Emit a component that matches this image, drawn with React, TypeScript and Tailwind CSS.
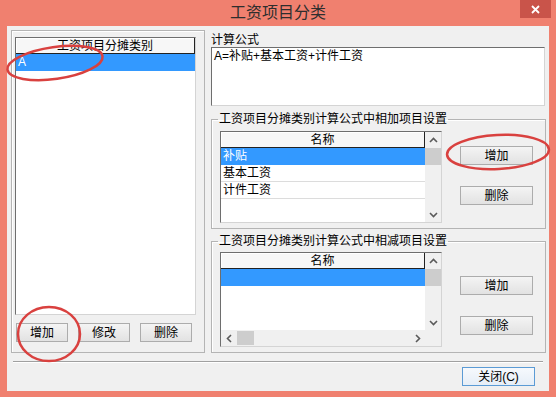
import React from "react";

const font = "font-['Liberation_Sans','Noto_Sans_CJK_SC',sans-serif]";

function Chevron({ dir }: { dir: "up" | "down" | "left" | "right" }) {
  const pts = {
    up: "1,6 4.5,2.5 8,6",
    down: "1,3 4.5,6.5 8,3",
    left: "6,1 2.5,4.5 6,8",
    right: "3,1 6.5,4.5 3,8",
  }[dir];
  return (
    <svg width="9" height="9" viewBox="0 0 9 9">
      <polyline points={pts} fill="none" stroke="#5a5a5a" strokeWidth="1.6" />
    </svg>
  );
}

function Btn({ label, className = "" }: { label: string; className?: string }) {
  return (
    <div
      className={`flex items-center justify-center border border-[#acacac] bg-linear-to-b from-[#f4f4f4] to-[#e2e2e2] text-[12px] leading-none text-black ${className}`}
    >
      {label}
    </div>
  );
}

function VScroll({ thumbTop = 0 }: { thumbTop?: number }) {
  return (
    <div className="flex w-[16px] flex-col bg-[#f0f0f0]">
      <div className="flex h-[16px] items-center justify-center">
        <Chevron dir="up" />
      </div>
      <div className="h-[17px] bg-[#cdcdcd]" style={{ marginTop: thumbTop }} />
      <div className="flex-1" />
      <div className="flex h-[16px] items-center justify-center">
        <Chevron dir="down" />
      </div>
    </div>
  );
}

function Header({ label }: { label: string }) {
  return (
    <div className="flex h-[16px] items-center justify-center border-r border-b border-r-[#222] border-b-[#222] bg-[#f7f7f7] text-[12px] leading-none text-black shadow-[inset_1px_1px_0_#fff]">
      {label}
    </div>
  );
}

function Row({ label, selected = false }: { label: string; selected?: boolean }) {
  return (
    <div
      className={`flex h-[17px] items-center border-b pl-[2px] text-[12px] leading-none ${
        selected ? "border-b-[#3399ff] bg-[#3399ff] text-white" : "border-b-[#dcdcdc] text-black"
      }`}
    >
      {label}
    </div>
  );
}

function Group({ title, children, className = "" }: { title: string; children: React.ReactNode; className?: string }) {
  return (
    <fieldset className={`border border-[#b4b4b4] shadow-[inset_1px_1px_0_#fff] ${className}`}>
      <legend className="ml-[6px] px-[1px] text-[12px] leading-[13px] text-black">{title}</legend>
      {children}
    </fieldset>
  );
}

const sunken = "border border-t-[#6e6e6e] border-l-[#6e6e6e] border-r-[#d4d4d4] border-b-[#d4d4d4] bg-white";

export default function App() {
  return (
    <div className={`relative flex h-[397px] w-[556px] flex-col bg-[#f0806f] ${font}`}>
      {/* title bar */}
      <div className="relative flex h-[26px] items-center justify-center">
        <span className="text-[16px] leading-none text-[#2e2e2e]">工资项目分类</span>
        <div className="absolute top-0 right-[5px] flex h-[18px] w-[31px] items-center justify-center bg-[#c9544a]">
          <svg width="9" height="9" viewBox="0 0 9 9">
            <path d="M1 1L8 8M8 1L1 8" stroke="#fff" strokeWidth="1.8" />
          </svg>
        </div>
      </div>

      {/* client */}
      <div className="mx-[7px] mb-[6px] flex flex-1 flex-col bg-[#f0f0f0]">
        <div className="flex pt-[4px] pl-[4px]">
          {/* left panel */}
          <div className="flex h-[323px] w-[194px] flex-col border border-[#b4b4b4] pt-[6px] pl-[3px] shadow-[inset_1px_1px_0_#fff]">
            <div className={`h-[278px] w-[181px] ${sunken}`}>
              <Header label="工资项目分摊类别" />
              <Row label="A" selected />
            </div>
            <div className="mt-[8px] ml-[1px] flex gap-[10px]">
              <Btn label="增加" className="h-[19px] w-[52px]" />
              <Btn label="修改" className="h-[19px] w-[52px]" />
              <Btn label="删除" className="h-[19px] w-[52px]" />
            </div>
          </div>

          {/* right panel */}
          <div className="ml-[6px] flex w-[335px] flex-col">
            <div className="mt-[4px] text-[12px] leading-[13px] text-black">计算公式</div>
            <div className={`h-[59px] w-[334px] pt-[2px] pl-[2px] text-[12px] leading-[13px] text-black ${sunken}`}>
              A=补贴+基本工资+计件工资
            </div>

            <Group title="工资项目分摊类别计算公式中相加项目设置" className="mt-[7px] h-[116px]">
              <div className="flex pt-[5px] pl-[8px]">
                <div className={`flex h-[92px] w-[222px] ${sunken}`}>
                  <div className="flex-1">
                    <Header label="名称" />
                    <Row label="补贴" selected />
                    <Row label="基本工资" />
                    <Row label="计件工资" />
                  </div>
                  <VScroll />
                </div>
                <div className="ml-[18px] flex flex-col gap-[21px] pt-[15px]">
                  <Btn label="增加" className="h-[19px] w-[73px]" />
                  <Btn label="删除" className="h-[19px] w-[73px]" />
                </div>
              </div>
            </Group>

            <Group title="工资项目分摊类别计算公式中相减项目设置" className="mt-[6px] h-[118px]">
              <div className="flex pt-[4px] pl-[8px]">
                <div className={`flex h-[95px] w-[222px] flex-col ${sunken}`}>
                  <div className="flex flex-1">
                    <div className="flex-1">
                      <Header label="名称" />
                      <Row label="" selected />
                    </div>
                    <VScroll />
                  </div>
                  <div className="flex h-[16px] bg-[#f0f0f0]">
                    <div className="flex w-[16px] items-center justify-center">
                      <Chevron dir="left" />
                    </div>
                    <div className="my-[1px] w-[17px] bg-[#cdcdcd]" />
                    <div className="flex-1" />
                    <div className="flex w-[16px] items-center justify-center">
                      <Chevron dir="right" />
                    </div>
                    <div className="w-[16px]" />
                  </div>
                </div>
                <div className="ml-[18px] flex flex-col gap-[21px] pt-[24px]">
                  <Btn label="增加" className="h-[19px] w-[73px]" />
                  <Btn label="删除" className="h-[19px] w-[73px]" />
                </div>
              </div>
            </Group>
          </div>
        </div>

        {/* separator */}
        <div className="mx-[6px] mt-[8px] h-[2px] border-t border-b border-t-[#a0a0a0] border-b-white" />

        <div className="mt-[4px] flex justify-end pr-[14px]">
          <Btn label="关闭(C)" className="h-[19px] w-[73px] !border-[#5b9bd5] from-[#f6f9fd] to-[#e6eef7]" />
        </div>
      </div>

      {/* red annotation circles */}
      <svg className="pointer-events-none absolute inset-0" width="556" height="397" viewBox="0 0 556 397">
        <g fill="none" stroke="#d9413f" strokeWidth="2.5">
          <ellipse cx="55" cy="63" rx="48" ry="16" transform="rotate(-8 55 63)" />
          <ellipse cx="498" cy="152" rx="51" ry="17" transform="rotate(-3 498 152)" />
          <ellipse cx="49" cy="334" rx="31" ry="27" />
        </g>
      </svg>
    </div>
  );
}
